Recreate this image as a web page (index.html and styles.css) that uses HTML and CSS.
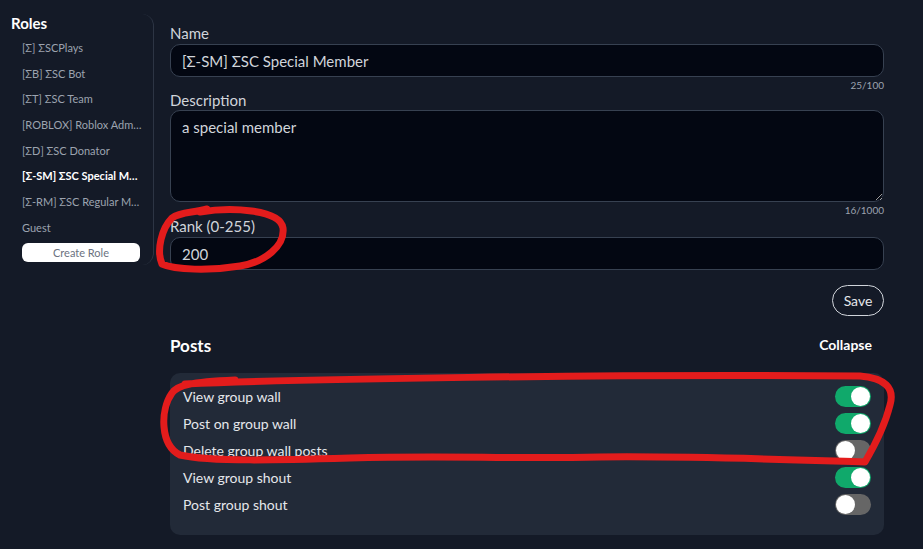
FILE: index.html
```html
<!DOCTYPE html>
<html lang="en">
<head>
    <meta charset="UTF-8">
    <meta name="viewport" content="width=device-width, initial-scale=1.0">
    <title>Roles</title>
    <link rel="stylesheet" href="styles.css">
</head>
<body>

    <div class="sidebar">
        <h2>Roles</h2>
        <div class="role-list">
            <div class="role">[Σ] ΣSCPlays</div>
            <div class="role">[ΣB] ΣSC Bot</div>
            <div class="role">[ΣT] ΣSC Team</div>
            <div class="role">[ROBLOX] Roblox Administrator</div>
            <div class="role">[ΣD] ΣSC Donator</div>
            <div class="role active">[Σ-SM] ΣSC Special Member</div>
            <div class="role">[Σ-RM] ΣSC Regular Member</div>
            <div class="role">Guest</div>
        </div>
        <button class="create-btn">Create Role</button>
    </div>

    <div class="main">
        <label class="field-label">Name</label>
        <input class="field" type="text" value="[Σ-SM] ΣSC Special Member">
        <div class="counter">25/100</div>

        <label class="field-label">Description</label>
        <textarea class="field area">a special member</textarea>
        <div class="counter">16/1000</div>

        <label class="field-label rank-label">Rank (0-255)</label>
        <input class="field" type="text" value="200">

        <div class="save-row">
            <button class="save-btn">Save</button>
        </div>

        <div class="section-head">
            <h3>Posts</h3>
            <span class="collapse">Collapse</span>
        </div>

        <div class="perm-box">
            <div class="perm"><span>View group wall</span><span class="toggle on"></span></div>
            <div class="perm"><span>Post on group wall</span><span class="toggle on"></span></div>
            <div class="perm"><span>Delete group wall posts</span><span class="toggle"></span></div>
            <div class="perm"><span>View group shout</span><span class="toggle on"></span></div>
            <div class="perm"><span>Post group shout</span><span class="toggle"></span></div>
        </div>
    </div>

    <svg class="marker" width="923" height="549" viewBox="0 0 923 549">
        <path d="M 200 212 C 230 207, 280 209, 283 228 C 285 246, 265 262, 240 266 C 210 271, 175 270, 162 264 C 156 250, 162 228, 172 218 C 180 212, 192 213, 207 209" />
        <path d="M 185 384 C 300 379, 600 374, 860 376 C 885 378, 895 388, 890 405 C 885 425, 875 445, 865 462 C 800 460, 700 456, 600 457 C 500 459, 450 455, 350 458 C 280 460, 210 462, 180 455 C 160 445, 160 410, 172 393 C 178 385, 190 382, 235 380" />
    </svg>

</body>
</html>
```

FILE: styles.css
```css
body {
    margin: 0;
    padding: 0;
    background-color: #141a27;
    font-family: "Lato", "Noto Sans", sans-serif;
    color: #d1d5db;
    display: flex;
    align-items: flex-start;
    height: 549px;
    overflow: hidden;
}
.sidebar {
    box-sizing: border-box;
    width: 154px;
    height: 251px;
    margin-top: 14px;
    padding: 0 10px 0 11px;
    border-right: 1px solid #2d3544;
    border-radius: 0 12px 12px 0;
}
.sidebar h2 {
    margin: 0;
    font-size: 15px;
    line-height: 18px;
    font-weight: bold;
    color: #ffffff;
}
.role-list {
    margin-top: 3px;
    padding-left: 11px;
}
.role {
    width: 121px;
    font-size: 11px;
    line-height: 25.7px;
    height: 25.7px;
    color: #9ca3af;
    white-space: nowrap;
    overflow: hidden;
    text-overflow: ellipsis;
}
.role.active {
    color: #ffffff;
    font-weight: bold;
}
.create-btn {
    display: block;
    margin: 2px 0 0 11px;
    width: 118px;
    height: 19px;
    padding: 0;
    border: none;
    border-radius: 6px;
    background: #ffffff;
    color: #6b7280;
    font-family: inherit;
    font-size: 11px;
}
.main {
    flex: 1;
    padding: 24px 39px 0 16px;
}
.field-label {
    display: block;
    font-size: 15px;
    line-height: 18px;
    color: #d1d5db;
    margin-bottom: 2px;
}
.field {
    box-sizing: border-box;
    display: block;
    width: 100%;
    height: 33px;
    padding: 0 11px;
    background: #030712;
    border: 1px solid #374151;
    border-radius: 10px;
    color: #d1d5db;
    font-family: inherit;
    font-size: 15px;
    outline: none;
}
.area {
    height: 92px;
    padding-top: 7px;
    margin-top: -1px;
    resize: vertical;
}
.counter {
    text-align: right;
    font-size: 10px;
    line-height: 12px;
    margin-top: 2px;
    color: #9ca3af;
}
.rank-label {
    margin-top: 1px;
}
.save-row {
    display: flex;
    justify-content: flex-end;
    margin-top: 15px;
}
.save-btn {
    width: 52px;
    height: 31px;
    padding: 0;
    background: transparent;
    border: 1px solid #d1d5db;
    border-radius: 16px;
    color: #e5e7eb;
    font-family: inherit;
    font-size: 14px;
}
.section-head {
    display: flex;
    justify-content: space-between;
    align-items: center;
    margin-top: 17px;
    padding-right: 12px;
    height: 22px;
}
.section-head h3 {
    margin: 0;
    font-size: 17px;
    font-weight: bold;
    color: #ffffff;
    position: relative;
    top: 1px;
}
.collapse {
    font-size: 14px;
    font-weight: bold;
    color: #ffffff;
}
.perm-box {
    margin-top: 18px;
    padding: 10px 13px 17px 13px;
    background: #222a38;
    border-radius: 10px;
}
.perm {
    display: flex;
    justify-content: space-between;
    align-items: center;
    height: 27px;
    font-size: 14px;
    color: #e5e7eb;
}
.toggle {
    box-sizing: border-box;
    width: 36px;
    height: 21px;
    border-radius: 11px;
    background: #666666;
    padding: 1px;
    display: flex;
}
.toggle::after {
    content: "";
    width: 19px;
    height: 19px;
    border-radius: 50%;
    background: #ffffff;
}
.toggle.on {
    background: #10a96b;
    justify-content: flex-end;
}
.marker {
    position: absolute;
    left: 0;
    top: 0;
    pointer-events: none;
}
.marker path {
    fill: none;
    stroke: #e31c1c;
    stroke-width: 7;
    stroke-linecap: round;
    stroke-linejoin: round;
}
```
